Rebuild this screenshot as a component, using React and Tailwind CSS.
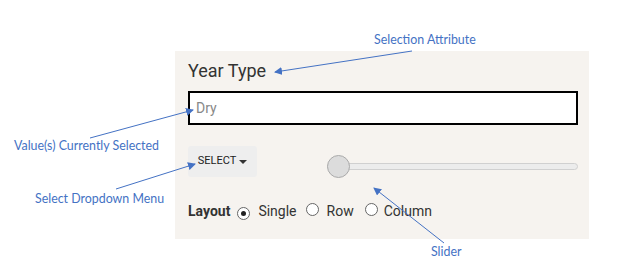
import React from "react";

function Radio({ checked }) {
  return (
    <span className="inline-flex h-[13px] w-[13px] items-center justify-center rounded-full border border-[#666] bg-white">
      {checked && <span className="h-[5px] w-[5px] rounded-full bg-[#222]" />}
    </span>
  );
}

export default function App() {
  return (
    <div className="relative h-[259px] w-[638px] overflow-hidden bg-white font-['Roboto',sans-serif]">
      <div className="ml-[175px] mt-[51px] flex h-[188px] w-[414px] flex-col bg-[#f6f3ef] pl-[13px] pr-[11px]">
        <div className="mt-[8px] text-[18px] leading-[24px] text-[#333]">Year Type</div>
        <div className="mt-[8px] flex h-[34px] w-[390px] items-center border-2 border-black bg-white pl-[6px] text-[14px] text-[#888]">
          Dry
        </div>
        <div className="mt-[21px] flex items-start">
          <div className="flex h-[31px] w-[69px] items-center justify-center gap-[3px] rounded-[3px] bg-[#eeeeee] text-[11px] text-[#222]">
            <span>SELECT</span>
            <span className="h-0 w-0 border-x-[4px] border-t-[4px] border-x-transparent border-t-[#333]" />
          </div>
          <div className="relative ml-[70px] mt-[17px] h-[7px] w-[251px] rounded-full border border-[#d0d0d0] bg-[#ececec]">
            <div className="absolute left-[-1px] top-[-9px] h-[23px] w-[23px] rounded-full border border-[#aaa] bg-[#dcdcdc]" />
          </div>
        </div>
        <div className="mt-[24px] flex items-center text-[14px] text-[#333]">
          <span className="font-bold">Layout</span>
          <span className="ml-[7px]"><Radio checked /></span>
          <span className="ml-[8px]">Single</span>
          <span className="ml-[9px]"><Radio /></span>
          <span className="ml-[8px]">Row</span>
          <span className="ml-[11px]"><Radio /></span>
          <span className="ml-[6px]">Column</span>
        </div>
      </div>

      <div className="absolute left-[374px] top-[31px] font-['Lato',sans-serif] text-[12.4px] text-[#4472c4]">Selection Attribute</div>
      <div className="absolute left-[14px] top-[137px] font-['Lato',sans-serif] text-[12.4px] text-[#4472c4]">Value(s) Currently Selected</div>
      <div className="absolute left-[35px] top-[190px] font-['Lato',sans-serif] text-[12.4px] text-[#4472c4]">Select Dropdown Menu</div>
      <div className="absolute left-[431px] top-[245px] font-['Lato',sans-serif] text-[12.4px] leading-[14px] text-[#4472c4]">Slider</div>

      <svg className="pointer-events-none absolute left-0 top-0" width="638" height="259">
        <defs>
          <marker id="ah" markerWidth="8" markerHeight="8" refX="7" refY="4" orient="auto" markerUnits="userSpaceOnUse">
            <path d="M0,0 L8,4 L0,8 Z" fill="#4472c4" />
          </marker>
        </defs>
        <g stroke="#4472c4" strokeWidth="1" fill="none">
          <line x1="412" y1="51" x2="275" y2="72" markerEnd="url(#ah)" />
          <line x1="90" y1="138" x2="193" y2="110" markerEnd="url(#ah)" />
          <line x1="116" y1="189" x2="195" y2="164" markerEnd="url(#ah)" />
          <line x1="444" y1="243" x2="374" y2="188" markerEnd="url(#ah)" />
        </g>
      </svg>
    </div>
  );
}
